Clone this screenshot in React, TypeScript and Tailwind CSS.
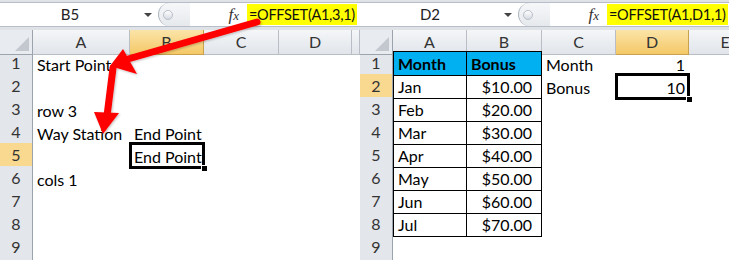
import React from "react";

const FONT = { fontFamily: "Lato, 'Open Sans', sans-serif" };

type Cell = { text?: string; bold?: boolean; right?: boolean; blue?: boolean; boxed?: boolean; selected?: boolean; pr?: string };

function FormulaBar({ name, formula }: { name: string; formula: string }) {
  return (
    <div className="h-[30px] bg-[#dfe3e8] pt-[2px] pb-[3px]">
      <div className="flex h-full border-y border-[#b7bec7] bg-white">
        <div className="relative flex w-[158px] shrink-0 items-center justify-center pr-[18px] text-[15px] text-[#222]">
          {name}
          <span className="absolute right-[6px] top-[10px] h-0 w-0 border-x-[4px] border-t-[4px] border-x-transparent border-t-[#444]" />
        </div>
        <div className="flex w-[32px] shrink-0 items-center rounded-l-full border-l border-[#aab2bc] bg-gradient-to-b from-[#f6f7f9] to-[#e6e9ed] pl-[4px]">
          <span className="h-[10px] w-[10px] rounded-full border border-[#b9c0c9] bg-gradient-to-b from-white to-[#d6dbe1]" />
        </div>
        <div className="flex w-[57px] shrink-0 items-center justify-end pr-[8px]">
          <span className="text-[17px] italic text-[#333]" style={{ fontFamily: "'Liberation Serif', serif" }}>
            f<span className="text-[13px]">x</span>
          </span>
        </div>
        <div className="flex min-w-0 flex-1 items-center">
          <span className="flex h-[21px] shrink-0 items-center whitespace-nowrap bg-[#ffff00] px-[2px] text-[14.5px] tracking-[-0.3px] text-[#111]">{formula}</span>
        </div>
      </div>
    </div>
  );
}

function Panel({ cols, gridCls, name, formula, selCol, selRow, data }: {
  cols: string[];
  gridCls: string;
  name: string;
  formula: string;
  selCol: number;
  selRow: number;
  data: Record<number, Cell[]>;
}) {
  return (
    <div className="flex flex-col overflow-hidden" style={FONT}>
      <FormulaBar name={name} formula={formula} />
      <div className={`grid h-[21px] ${gridCls}`}>
        <div className="relative border-r border-b border-[#9ba3ad] bg-[#e8ebef]">
          <span className="absolute bottom-[3px] right-[3px] h-0 w-0 border-l-[14px] border-b-[14px] border-l-transparent border-b-[#c3c8cf]" />
        </div>
        {cols.map((c, i) => (
          <div
            key={i}
            className={
              i + 1 === selCol
                ? "flex items-center justify-center border-r border-b border-[#c9a14d] bg-gradient-to-b from-[#fbe4a8] to-[#f4c865] text-[16px] text-[#333]"
                : "flex items-center justify-center border-r border-b border-[#b9bec6] bg-gradient-to-b from-[#f4f6f8] to-[#e1e5ea] text-[16px] text-[#333]"
            }
          >
            {c}
          </div>
        ))}
      </div>
      {Array.from({ length: 10 }).map((_, r) => {
        const row = r + 1;
        const cells = data[row] || [];
        return (
          <div key={row} className={`grid h-[23px] shrink-0 ${gridCls}`}>
            <div
              className={
                row === selRow
                  ? "flex items-center justify-center border-r border-b border-r-[#9ba3ad] border-b-[#e0b75a] bg-[#f9d88f] text-[16px] text-[#333]"
                  : "flex items-center justify-center border-r border-b border-r-[#9ba3ad] border-b-[#c4c9d0] bg-[#e3e6eb] text-[16px] text-[#333]"
              }
            >
              {row < 10 ? row : ""}
            </div>
            {cols.map((_, ci) => {
              const cell = cells[ci] || {};
              return (
                <div
                  key={ci}
                  className={[
                    "relative flex items-end whitespace-nowrap pb-[1px] text-[16px] leading-[20px] text-black",
                    cell.right ? "justify-end" : "justify-start pl-[4px]",
                    cell.pr || (cell.right ? "pr-[4px]" : ""),
                    cell.bold ? "font-bold" : "",
                    cell.blue ? "bg-[#00b0f0]" : "",
                    cell.boxed ? "border-r border-b border-black" : "",
                    cell.boxed && ci === 0 ? "border-l" : "",
                    cell.boxed && row === 1 ? "border-t" : "",
                  ].join(" ")}
                >
                  <span>{cell.text}</span>
                  {cell.selected && (
                    <>
                      <span className="pointer-events-none absolute -left-[1px] -top-[1px] -right-[1px] -bottom-[1px] border-[3px] border-black" />
                      <span className="absolute -bottom-[4px] -right-[4px] h-[7px] w-[7px] border border-white bg-black" />
                    </>
                  )}
                </div>
              );
            })}
          </div>
        );
      })}
    </div>
  );
}

const leftData: Record<number, Cell[]> = {
  1: [{ text: "Start Point" }],
  3: [{ text: "row 3" }],
  4: [{ text: "Way Station" }, { text: "End Point" }],
  5: [{}, { text: "End Point", selected: true }],
  6: [{ text: "cols 1" }],
};

const months = ["Jan", "Feb", "Mar", "Apr", "May", "Jun", "Jul"];
const rightData: Record<number, Cell[]> = {
  1: [
    { text: "Month", bold: true, blue: true, boxed: true },
    { text: "Bonus", bold: true, blue: true, boxed: true },
    { text: "Month" },
    { text: "1", right: true },
  ],
};
months.forEach((m, i) => {
  rightData[i + 2] = [
    { text: m, boxed: true },
    { text: `$${(i + 1) * 10}.00`, right: true, boxed: true, pr: "pr-[9px]" },
  ];
});
rightData[2].push({ text: "Bonus" }, { text: "10", right: true, selected: true });

export default function App() {
  return (
    <div className="relative flex h-[260px] w-[729px] overflow-hidden bg-white">
      <div className="w-[360px] shrink-0 overflow-hidden">
        <Panel
          cols={["A", "B", "C", "D", ""]}
          gridCls="grid-cols-[33px_97px_74px_75px_73px_8px]"
          name="B5"
          formula="=OFFSET(A1,3,1)"
          selCol={2}
          selRow={5}
          data={leftData}
        />
      </div>
      <div className="w-[369px] shrink-0 overflow-hidden">
        <Panel
          cols={["A", "B", "C", "D", "E"]}
          gridCls="grid-cols-[33px_74px_75px_74px_73px_73px]"
          name="D2"
          formula="=OFFSET(A1,D1,1)"
          selCol={4}
          selRow={2}
          data={rightData}
        />
      </div>
      <svg className="pointer-events-none absolute left-0 top-0" width="729" height="260" viewBox="0 0 729 260">
        <defs>
          <filter id="sh" x="-10%" y="-10%" width="120%" height="120%">
            <feDropShadow dx="1" dy="1" stdDeviation="1" floodColor="#000" floodOpacity="0.25" />
          </filter>
        </defs>
        <g fill="#ff0000" stroke="#ff0000" filter="url(#sh)">
          <line x1="257" y1="22" x2="128" y2="59" strokeWidth="7" strokeLinecap="round" />
          <polygon points="110,66 123,49 137,74" stroke="none" />
          <line x1="113" y1="68" x2="107" y2="116" strokeWidth="7" strokeLinecap="round" />
          <polygon points="103,134 94,112 119,113" stroke="none" />
        </g>
      </svg>
    </div>
  );
}
